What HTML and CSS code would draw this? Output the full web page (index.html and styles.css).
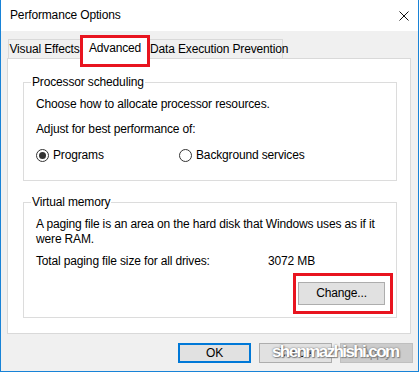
FILE: index.html
```html
<!DOCTYPE html>
<html>
    <head>
        <title>Performance Options</title>
        <link rel="stylesheet" href="styles.css">
    </head>
    <body>
        <div class="window">
            <header class="titlebar">
                <span class="title">Performance Options</span>
                <svg class="close" width="10" height="10" viewBox="0 0 10 10">
                    <path d="M0.5 0.5L9.5 9.5M9.5 0.5L0.5 9.5" stroke="#111" stroke-width="1" fill="none"/>
                </svg>
            </header>
            <div class="body">
                <nav class="tabs">
                    <div class="tab tab-visual">Visual Effects</div>
                    <div class="tab tab-advanced active">Advanced<span class="mark mark-tab"></span></div>
                    <div class="tab tab-dep">Data Execution Prevention</div>
                </nav>
                <main class="panel">
                    <fieldset class="group group-cpu">
                        <legend>Processor scheduling</legend>
                        <p>Choose how to allocate processor resources.</p>
                        <p class="adjust">Adjust for best performance of:</p>
                        <div class="radios">
                            <label class="radio radio-first"><span class="dot checked"></span>Programs</label>
                            <label class="radio"><span class="dot"></span>Background services</label>
                        </div>
                    </fieldset>
                    <fieldset class="group group-mem">
                        <legend>Virtual memory</legend>
                        <p>A paging file is an area on the hard disk that Windows uses as if it were RAM.</p>
                        <div class="total">
                            <span class="total-label">Total paging file size for all drives:</span>
                            <span>3072 MB</span>
                        </div>
                        <div class="change-row">
                            <div class="change-wrap">
                                <button class="btn change">Change...</button>
                                <span class="mark mark-change"></span>
                            </div>
                        </div>
                    </fieldset>
                </main>
                <footer class="buttons">
                    <button class="btn default">OK</button>
                    <button class="btn">Cancel</button>
                    <button class="btn" disabled>Apply</button>
                    <span class="watermark">shenmazhishi.com</span>
                </footer>
            </div>
        </div>
    </body>
</html>
```

FILE: styles.css
```css
* {
    box-sizing: border-box;
}
body {
    margin: 0;
    font: 12px/15px "Liberation Sans", Arial, sans-serif;
    letter-spacing: -0.15px;
    color: #000;
}
p {
    margin: 0;
}
.window {
    width: 419px;
    height: 372px;
    border: 1px solid #1883d7;
    border-top: none;
    background: #f0f0f0;
    display: flex;
    flex-direction: column;
}
.titlebar {
    height: 31px;
    flex: none;
    background: #fff;
    display: flex;
    align-items: center;
    padding: 0 9px 0 9px;
}
.close {
    margin-left: auto;
}
.body {
    flex: 1;
    display: flex;
    flex-direction: column;
    padding: 4px 7px 0 6px;
}
.tabs {
    display: flex;
    align-items: flex-end;
    height: 23px;
    padding-left: 1px;
    position: relative;
    z-index: 1;
}
.tab {
    height: 19px;
    border: 1px solid #d9d9d9;
    border-bottom: none;
    background: #f0f0f0;
    text-align: center;
    line-height: 16px;
    padding-top: 1px;
    white-space: nowrap;
}
.tab-visual {
    width: 73px;
}
.tab-advanced {
    width: 68px;
}
.tab-dep {
    width: 134px;
}
.tab.active {
    height: 24px;
    margin-bottom: -1px;
    background: #fff;
    padding-top: 4px;
    position: relative;
}
.mark {
    position: absolute;
    border: 3px solid #e8141f;
    pointer-events: none;
}
.mark-tab {
    top: -1px;
    left: -2px;
    right: -2px;
    bottom: -8px;
}
.panel {
    flex: none;
    height: 276px;
    background: #fff;
    border: 1px solid #d9d9d9;
    padding: 16px 13px 0 15px;
}
.group {
    margin: 0;
    min-width: 0;
    border: 1px solid #dcdcdc;
    padding: 7px 11px 17px 12px;
}
.group legend {
    padding: 0 1px;
    margin-left: -5px;
    line-height: 15px;
}
.group-mem {
    margin-top: 14px;
    padding-bottom: 12px;
}
.adjust {
    margin-top: 10px;
}
.radios {
    display: flex;
    margin-top: 11px;
}
.radio {
    display: flex;
    align-items: center;
}
.radio-first {
    width: 143px;
}
.dot {
    width: 13px;
    height: 13px;
    border: 1px solid #333;
    border-radius: 50%;
    background: #fff;
    margin-right: 4px;
    display: flex;
    align-items: center;
    justify-content: center;
}
.dot.checked::after {
    content: "";
    width: 7px;
    height: 7px;
    border-radius: 50%;
    background: #333;
}
.total {
    display: flex;
    margin-top: 7px;
}
.total-label {
    width: 232px;
}
.change-row {
    display: flex;
    justify-content: flex-end;
    margin-top: 13px;
}
.change-wrap {
    position: relative;
}
.mark-change {
    top: -9px;
    left: -5px;
    right: -8px;
    bottom: -9px;
}
.btn {
    font: inherit;
    letter-spacing: inherit;
    color: #000;
    background: #e1e1e1;
    border: 1px solid #adadad;
    padding: 0;
    width: 73px;
    height: 20px;
}
.change {
    display: block;
    width: 87px;
    height: 23px;
}
.btn.default {
    border: 2px solid #0078d7;
}
.btn:disabled {
    background: #cccccc;
    border-color: #bfbfbf;
    color: #838383;
}
.buttons {
    display: flex;
    justify-content: flex-end;
    gap: 8px;
    margin-top: 9px;
    margin-right: -2px;
    position: relative;
}
.watermark {
    position: absolute;
    left: 265px;
    top: -3px;
    font: bold 17px/24px "Liberation Sans", Arial, sans-serif;
    letter-spacing: -1.6px;
    color: #fff;
    text-shadow: 0 0 2px #666, 1px 1px 1px #888;
    pointer-events: none;
}
```
